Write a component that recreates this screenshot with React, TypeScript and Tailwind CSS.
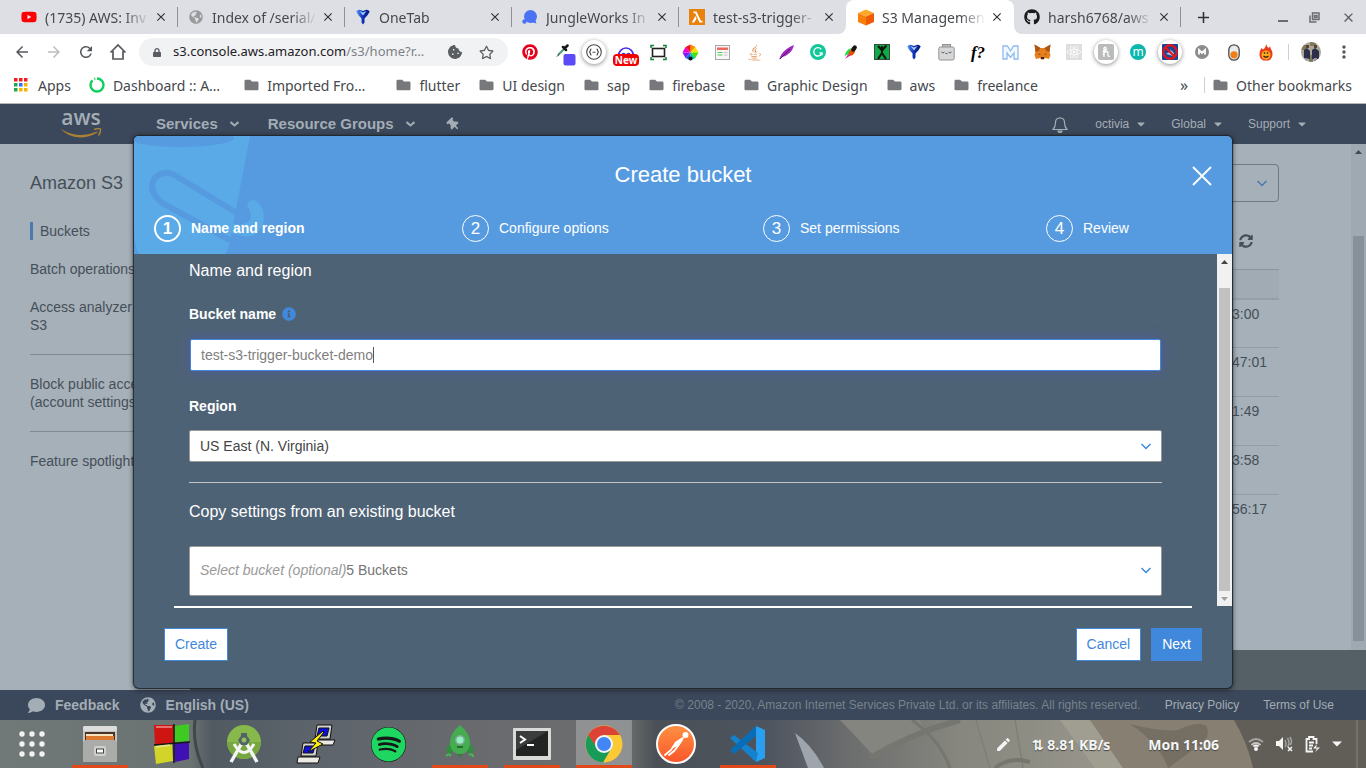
import React from "react";
import {
  FaYoutube, FaGithub, FaPinterest, FaJava, FaReact, FaSpotify, FaThumbtack,
  FaComment, FaGlobeAmericas, FaInfoCircle, FaSyncAlt, FaLock, FaCookieBite,
  FaFolder, FaCaretDown, FaRegStar,
} from "react-icons/fa";
import { MdArrowBack, MdArrowForward, MdRefresh, MdClose, MdAdd, MdMoreVert, MdEdit } from "react-icons/md";

const chromeFont = "font-['Noto_Sans',sans-serif]";
const awsFont = "font-['Liberation_Sans',Arial,sans-serif]";

/* ---------- favicons ---------- */

const OneTabIcon = () => (
  <svg width="14" height="16" viewBox="0 0 14 16">
    <defs>
      <linearGradient id="onetab" x1="0" x2="1">
        <stop offset="0" stopColor="#5a98f4" />
        <stop offset="0.5" stopColor="#0a2fb4" />
        <stop offset="1" stopColor="#061a70" />
      </linearGradient>
    </defs>
    <path d="M0.300 2.500 Q2 0 4.500 1 L7 2 L9.500 1 Q12 0 13.700 2.500 Q12 6.500 8.500 9.500 V13.500 L7 15.500 L5.500 13.500 V9.500 Q2 6.500 0.300 2.500Z" fill="url(#onetab)" />
    <path d="M3.500 2 L7 6.500 L10.500 2 L7 3.500Z" fill="#a9cdfb" />
  </svg>
);
const JungleIcon = () => (
  <svg width="16" height="16" viewBox="0 0 16 16" fill="#4a72f5">
    <circle cx="8.500" cy="7.500" r="6.500" />
    <circle cx="2.500" cy="12.500" r="2.200" />
    <path d="M9 13 L14.500 14.500 L13 10Z" />
  </svg>
);
const LambdaIcon = () => (
  <svg width="16" height="16" viewBox="0 0 16 16">
    <rect width="16" height="16" fill="#e8820c" />
    <path d="M4.500 2.500 H7.500 L12 12 L13.500 11.500 V13.500 H10.500 L6.200 4.200 H4.500Z M6.400 7 L7.600 9.500 L5.200 13.500 H2.800Z" fill="#fff" />
  </svg>
);
const CubeIcon = () => (
  <svg width="16" height="17" viewBox="0 0 16 17">
    <path d="M8 0.500 L16 4 L8 7.500 L0 4Z" fill="#ffa92c" />
    <path d="M0 4 L8 7.500 V16.500 L0 13Z" fill="#f77f0a" />
    <path d="M16 4 L8 7.500 V16.500 L16 13Z" fill="#ee5a05" />
  </svg>
);

const tabs = [
  { title: "(1735) AWS: Inv", icon: <FaYoutube className="text-[16px] text-[#f00]" /> },
  { title: "Index of /serial/", icon: <FaGlobeAmericas className="text-[14px] text-[#9a9a9c]" /> },
  { title: "OneTab", icon: <OneTabIcon /> },
  { title: "JungleWorks In", icon: <JungleIcon /> },
  { title: "test-s3-trigger-", icon: <LambdaIcon /> },
  { title: "S3 Managemen", icon: <CubeIcon />, active: true },
  { title: "harsh6768/aws", icon: <FaGithub className="text-[16px] text-[#1b1b1d]" /> },
];

function TabStrip() {
  return (
    <div className="flex h-[34px] items-stretch bg-[#dedfe5] pl-[11px] text-[14px] text-[#45484c]">
      {tabs.map((t, i) => (
        <div
          key={t.title}
          className={
            t.active
              ? "relative flex w-[168px] shrink-0 items-center rounded-t-lg bg-white pr-[10px] pl-[12px]"
              : "flex w-[167px] shrink-0 items-center pr-[10px] pl-[10px]"
          }
        >
          {t.active && (
            <>
              <svg className="absolute bottom-0 -left-2" width="8" height="8"><path d="M8 0 A8 8 0 0 1 0 8 H8Z" fill="#fff" /></svg>
              <svg className="absolute -right-2 bottom-0" width="8" height="8"><path d="M0 0 A8 8 0 0 0 8 8 H0Z" fill="#fff" /></svg>
            </>
          )}
          <span className="flex w-4 shrink-0 justify-center">{t.icon}</span>
          <span className="ml-2 flex-1 overflow-hidden whitespace-nowrap [mask-image:linear-gradient(to_right,#000_75%,transparent)]">{t.title}</span>
          <button aria-label="Close tab" className="ml-1 text-[14px] text-[#303236]"><MdClose /></button>
          {!t.active && i !== 4 && <span className="-mr-[10px] ml-[9px] h-5 w-px bg-[#8f9196]" />}
        </div>
      ))}
      <button aria-label="New tab" className="ml-[13px] text-[19px] text-[#303236]"><MdAdd /></button>
      <div className="ml-auto flex items-center gap-[21px] pr-[10px] text-[#5a5c60]">
        <button aria-label="Minimize" className="mt-2 h-[2px] w-[10px] bg-[#6a6c70]" />
        <button aria-label="Restore">
          <svg width="11" height="11" viewBox="0 0 11 11" fill="none" stroke="#6a6c70" strokeWidth="1.500"><path d="M3.500 1 H10 V7.500 H3.500Z M1 3.500 V10 H7.500 M5.500 3.500 h2.500 v2 h-2.500z" /></svg>
        </button>
        <button aria-label="Close window" className="text-[15px]"><MdClose /></button>
      </div>
    </div>
  );
}

/* ---------- extensions ---------- */

const Badge = ({ children }: { children: React.ReactNode }) => (
  <span className="flex size-6 items-center justify-center rounded-full bg-white shadow-[0_1px_4px_rgba(0,0,0,0.45)]">{children}</span>
);

const extensions: [string, React.ReactNode][] = [
  ["Pinterest", <FaPinterest className="text-[16px] text-[#e8001c]" />],
  ["Color picker", (
    <svg width="22" height="22" viewBox="0 0 22 22" className="mt-[6px] ml-2">
      <path d="M3 11 L9 5" stroke="#4d9a78" strokeWidth="2" /><path d="M2 12.500 l2-2" stroke="#222" />
      <path d="M8 3 L11 6 M9.500 4.500 L12.500 1.500" stroke="#16181a" strokeWidth="2.500" strokeLinecap="round" />
      <rect x="8.500" y="10" width="12" height="11.500" rx="2" fill="#5b4bf5" />
    </svg>)],
  ["JSON viewer", <Badge><svg width="16" height="16" viewBox="0 0 16 16" fill="none" stroke="#45484c" strokeWidth="1.100"><circle cx="8" cy="8" r="7.300" /><path d="M5.500 5 Q4.300 5 4.500 6.500 L3.500 8 L4.500 9.500 Q4.300 11 5.500 11 M10.500 5 Q11.700 5 11.500 6.500 L12.500 8 L11.500 9.500 Q11.700 11 10.500 11 M6.500 8.200h3" /></svg></Badge>],
  ["Screen recorder", (
    <span className="relative flex h-6 w-[26px] justify-center">
      <svg width="18" height="12" viewBox="0 0 18 12" fill="none" stroke="#4f2ee0" strokeWidth="1.700" className="mt-1"><path d="M1.500 12 A7.500 8 0 0 1 16.500 12 M5 10.500 q1.500-2 3 0 M10 10.500 q1.500-2 3 0" /></svg>
      <span className="absolute inset-x-0 bottom-[-2px] h-3 rounded-sm bg-[#f40000] text-center text-[10px] leading-3 font-bold text-white">New</span>
    </span>)],
  ["Screen capture", (
    <svg width="17" height="17" viewBox="0 0 17 17" fill="none"><rect x="2.500" y="4.500" width="12" height="8" stroke="#222" strokeWidth="1.600" /><path d="M1 4V1.500h3 M13 1.500h3v2.500 M16 13v2.500h-3 M4 15.500H1v-2.500" stroke="#118033" strokeWidth="1.500" /></svg>)],
  ["Color wheel", (
    <svg width="17" height="17" viewBox="0 0 17 17">
      <path d="M8.500 8.500 V0.500 L13.500 3Z" fill="#ff8a00" /><path d="M8.500 8.500 L13.500 3 L16.500 8.500Z" fill="#f5e400" />
      <path d="M8.500 8.500 H16.500 L13.500 14Z" fill="#4ae000" /><path d="M8.500 8.500 L13.500 14 L8.500 16.500Z" fill="#00c9a0" />
      <path d="M8.500 8.500 V16.500 L3.500 14Z" fill="#146cf5" /><path d="M8.500 8.500 L3.500 14 L0.500 8.500Z" fill="#7a1df0" />
      <path d="M8.500 8.500 H0.500 L3.500 3Z" fill="#f000d0" /><path d="M8.500 8.500 L3.500 3 L8.500 0.500Z" fill="#f01515" /><circle cx="8.500" cy="14.500" r="2" fill="#111" />
    </svg>)],
  ["Page notes", (
    <svg width="15" height="15" viewBox="0 0 15 15"><rect x="0.500" y="0.500" width="14" height="14" fill="#f7f7f7" stroke="#a8a8a8" /><rect x="2" y="2.500" width="11" height="2.500" fill="#f0675e" /><path d="M2.500 7.500h5M2.500 10h5" stroke="#53c957" /><path d="M9 7.500h3.500M9 10h3.500" stroke="#d5c0c0" /></svg>)],
  ["Java", <FaJava className="text-[17px] text-[#d98642]" />],
  ["Feather", (
    <svg width="17" height="17" viewBox="0 0 17 17"><path d="M1 16 Q3 9 8 5.500 Q12 2 16 1 Q15 6 11 9.500 Q7 13 3 13.500Z" fill="#a02abf" /><path d="M2 15 L12 5" stroke="#5b1173" /></svg>)],
  ["Grammarly", (
    <svg width="16" height="16" viewBox="0 0 16 16"><circle cx="8" cy="8" r="8" fill="#12c79a" /><path d="M11.300 5.300 A4.200 4.200 0 1 0 12 9 H9.500 M12 8.300 v3" fill="none" stroke="#fff" strokeWidth="1.400" /></svg>)],
  ["Color zilla", (
    <svg width="15" height="16" viewBox="0 0 15 16"><path d="M2 15 L6 9 L8 11Z" fill="#e612b8" /><path d="M1.500 12 Q3 6 8 4 L6 10Z" fill="#18e040" /><ellipse cx="9" cy="8" rx="2.500" ry="4" transform="rotate(35 9 8)" fill="#e84a0c" /><ellipse cx="11" cy="4.500" rx="2.200" ry="3.500" transform="rotate(35 11 4.500)" fill="#17120f" /></svg>)],
  ["Tabs exporter", (
    <svg width="16" height="16" viewBox="0 0 16 16"><rect x="0.500" y="0.500" width="15" height="15" fill="#10a848" stroke="#3c4a40" /><path d="M4 2 L8 6.500 L12.500 1.500 M8 6 V9 L12 15 M8 9 L4 15" fill="none" stroke="#07150b" strokeWidth="2" /><circle cx="8" cy="3.500" r="1.500" fill="#07150b" /></svg>)],
  ["OneTab", <OneTabIcon />],
  ["Robot", (
    <svg width="17" height="17" viewBox="0 0 17 17"><rect x="4.500" y="0.500" width="8" height="4" fill="#b7b9bb" stroke="#909294" /><rect x="0.800" y="3" width="15.400" height="13" rx="1.500" fill="#d5d7d8" stroke="#929496" /><path d="M3.500 8 q1.500 2 3 0 M10.500 8 q1.500 2 3 0 M7.500 9.500h2" fill="none" stroke="#55585a" /></svg>)],
  ["Font finder", <span className="font-['Liberation_Serif',serif] text-[17px] leading-none font-bold text-black italic">f?</span>],
  ["Mail", (
    <svg width="17" height="15" viewBox="0 0 17 15"><path d="M1 14 V1 H5.500 L8.500 6 L11.500 1 H16 V14 H12 V8 L8.500 12.500 L5 8 V14Z" fill="#f4f9ff" stroke="#8fbcec" strokeWidth="1.300" /></svg>)],
  ["MetaMask", (
    <svg width="17" height="16" viewBox="0 0 17 16"><path d="M0.500 0.500 L6.500 4 H10.500 L16.500 0.500 L15.500 8 L16.500 11 L15 15 L11 14 L10 15.500 H7 L6 14 L2 15 L0.500 11 L1.500 8Z" fill="#e67e1c" /><path d="M0.500 0.500 L6.500 4 L4.500 7 L1.500 8Z M16.500 0.500 L10.500 4 L12.500 7 L15.500 8Z" fill="#a9561a" /><path d="M4.500 9.500 l2.500 1 h-2z M12.500 9.500 l-2.500 1 h2z M7 13h3v2h-3z" fill="#2b2a36" /></svg>)],
  ["React tools", <span className="flex size-4 items-center justify-center bg-[#dededf]"><FaReact className="text-[14px] text-white" /></span>],
  ["Honey", <Badge><svg width="16" height="16" viewBox="0 0 16 16"><rect width="16" height="16" rx="2" fill="#b9bbbd" /><path d="M6 13 V4 Q8 2 8 4.500 L6 9 Q10 6 10 9 V11 Q10 13 12 12 M4.500 7.500 Q7 6.500 9 5.500" fill="none" stroke="#fff" strokeWidth="1.300" /></svg></Badge>],
  ["Momentum", <span className="flex size-4 items-center justify-center rounded-full bg-[#0cb7ae] text-[12px] leading-none text-white">m</span>],
  ["Blocker", <Badge><svg width="16" height="16" viewBox="0 0 16 16"><rect width="16" height="16" rx="1" fill="#1c4494" /><path d="M4 10 Q6 8 9 8 L8 5 L12 9 L11 12Z" fill="#a9c3e8" /><circle cx="8" cy="8" r="6.700" fill="none" stroke="#f01212" strokeWidth="2" /><path d="M3.500 3.500 L12.500 12.500" stroke="#f01212" strokeWidth="2" /></svg></Badge>],
  ["Mercury", <svg width="14" height="14" viewBox="0 0 14 14"><circle cx="7" cy="7" r="7" fill="#8c8c8c" /><path d="M4 9.500 V5 L7 8 L10 5 V9.500" fill="none" stroke="#fff" strokeWidth="1.800" /></svg>],
  ["Toggle", <svg width="12" height="17" viewBox="0 0 12 17"><rect x="0.800" y="0.800" width="10.400" height="15.400" rx="5.200" fill="#e9eaea" stroke="#4a4a4c" strokeWidth="1.300" /><circle cx="6" cy="10.800" r="3.600" fill="#f57e14" /></svg>],
  ["Flame", (
    <svg width="14" height="17" viewBox="0 0 14 17"><path d="M7 0 Q8 3 10 4 L11 2 Q11.500 5 13 7 Q15 14 9.500 16.500 H4.500 Q-1 14 1 7 L2.500 4 L4 5.500 Q7 3.500 7 0Z" fill="#ea3b1a" /><circle cx="7" cy="11" r="4.500" fill="#fbac1d" /><path d="M4.800 9h1.400M7.800 9h1.400M4.500 12 q2.500 2.500 5 0" stroke="#3f1b08" fill="none" strokeWidth="1.300" /></svg>)],
];

function Toolbar() {
  return (
    <div className="flex h-9 items-center bg-white pl-[13px]">
      <div className="flex shrink-0 items-center gap-[14px] text-[18px] text-[#55585c]">
        <button aria-label="Back"><MdArrowBack /></button>
        <button aria-label="Forward" className="text-[#bcbdc0]"><MdArrowForward /></button>
        <button aria-label="Reload"><MdRefresh /></button>
        <button aria-label="Home">
          <svg width="18" height="18" viewBox="0 0 18 18" fill="none" stroke="#55585c" strokeWidth="1.700"><path d="M1.500 9.500 L9 2 L16.500 9.500 M4 8 V16 H14 V8" /></svg>
        </button>
      </div>
      <div className="ml-3 flex h-7 min-w-0 flex-1 items-center rounded-full bg-[#f1f2f4] px-[14px]">
        <FaLock className="w-2 shrink-0 text-[11px] text-[#5a5d61]" />
        <div className="ml-3 flex flex-1 items-center text-[13px] text-[#1f2124]">
          <input aria-label="Address" defaultValue="s3.console.aws.amazon.com" className="bg-transparent [field-sizing:content] outline-none" />
          <span className="text-[#7d8084]">/s3/home?r…</span>
        </div>
        <FaCookieBite className="text-[14px] text-[#5a5d61]" />
        <button aria-label="Bookmark page" className="ml-[17px] text-[15px] text-[#5a5d61]"><FaRegStar /></button>
      </div>
      <div className="ml-[6px] flex shrink-0">
        {extensions.map(([name, icon]) => (
          <button key={name} aria-label={name} className="flex h-7 w-8 items-center justify-center">{icon}</button>
        ))}
      </div>
      <span className="ml-[6px] h-4 w-px shrink-0 bg-[#cfd0d2]" />
      <button aria-label="Profile" className="ml-3 shrink-0">
        <svg width="20" height="20" viewBox="0 0 20 20">
          <clipPath id="avatar"><circle cx="10" cy="10" r="10" /></clipPath>
          <g clipPath="url(#avatar)">
            <rect width="20" height="20" fill="#a9a795" />
            <path d="M0 3h5v5H0z M9 0h6v4H9z M8 13h4v7H8z" fill="#7c7a58" />
            <path d="M3 16 V8 L6 6 L9 9 V17Z M11 17 V8 L14 6 L18 9 V17Z" fill="#2c2f4a" />
            <path d="M4 16h2v4H4z M13 16h3v4h-3z" fill="#9c8fae" />
            <path d="M5 3h3v3H5z M13 3h3v3h-3z" fill="#5f4234" />
          </g>
        </svg>
      </button>
      <button aria-label="Browser menu" className="mr-[12px] ml-[13px] shrink-0 text-[20px] text-[#55585c]"><MdMoreVert /></button>
    </div>
  );
}

const bookmarks = ["Imported Fro…", "flutter", "UI design", "sap", "firebase", "Graphic Design", "aws", "freelance"];
const appDots = ["#f02020", "#f02020", "#f02020", "#20a84a", "#3b6cf0", "#f5b400", "#20a84a", "#f5b400", "#f5b400"];

function BookmarksBar() {
  return (
    <div className="flex h-[34px] items-center border-b border-[#b6b6b8] bg-white px-[14px] pb-[3px] text-[14px] whitespace-nowrap text-[#45484c]">
      <a href="#apps" className="flex items-center gap-[10px]">
        <svg width="14" height="14" viewBox="0 0 14 14">
          {appDots.map((c, i) => <rect key={i} x={(i % 3) * 5} y={Math.floor(i / 3) * 5} width="3.500" height="3.500" fill={c} />)}
        </svg>
        Apps
      </a>
      <a href="#dashboard" className="ml-[18px] flex items-center gap-2">
        <svg width="16" height="16" viewBox="0 0 16 16" fill="none" stroke="#10cf5c"><circle cx="8" cy="8" r="6.500" strokeWidth="2.400" strokeDasharray="35 2 1 2" transform="rotate(-90 8 8)" /></svg>
        Dashboard :: A…
      </a>
      <div className="ml-6 flex flex-1 gap-[19px]">
        {bookmarks.map((b) => (
          <a key={b} href="#folder" className={b === "Imported Fro…" ? "mr-3 flex items-center gap-2" : "flex items-center gap-2"}>
            <FaFolder className="w-[15px] text-[14px] text-[#77787b]" />{b}
          </a>
        ))}
      </div>
      <button aria-label="More bookmarks" className="text-[16px] leading-none">»</button>
      <span className="mr-2 ml-4 h-4 w-px bg-[#cfd0d2]" />
      <a href="#other" className="flex items-center gap-2"><FaFolder className="w-[15px] text-[14px] text-[#77787b]" />Other bookmarks</a>
    </div>
  );
}

/* ---------- console page ---------- */

const Chevron = ({ color }: { color: string }) => (
  <svg width="10" height="7" viewBox="0 0 10 7" fill="none" stroke={color} strokeWidth="1.500"><path d="M0.500 1 L5 5.500 L9.500 1" /></svg>
);
const NavChevron = () => (
  <svg width="9" height="6" viewBox="0 0 9 6" fill="none" stroke="#a3adb5" strokeWidth="2"><path d="M0.500 1 L4.500 4.500 L8.500 1" /></svg>
);

function ConsoleNav() {
  return (
    <nav className="flex h-10 items-center bg-[#3b475a] px-[60px] text-[#a3adb5]">
      <a href="#aws" className="flex w-[42px] flex-col items-center">
        <span className="h-[17px] font-['Open_Sans',sans-serif] text-[21px] leading-[13px] font-semibold">aws</span>
        <svg width="42" height="10" viewBox="0 0 42 10"><path d="M0 0.500 Q10 7 20 7 Q28 7 37 3.500 L37.500 4.500 Q29 9.500 20 9.500 Q8 9 0 0.500Z" fill="#a98135" /><path d="M34 1.500 Q39 0 40.500 1 Q41 4 38.500 7.500" fill="none" stroke="#a98135" strokeWidth="1.500" /></svg>
      </a>
      <button className="ml-[54px] flex items-center gap-3 text-[15px] font-bold">Services <NavChevron /></button>
      <button className="ml-[29px] flex items-center gap-3 text-[15px] font-bold">Resource Groups <NavChevron /></button>
      <button aria-label="Pin" className="ml-8 text-[13px]"><FaThumbtack className="-rotate-45" /></button>
      <div className="ml-auto flex items-center text-[12px]">
        <button aria-label="Notifications" className="mr-[27px]">
          <svg width="16" height="17" viewBox="0 0 16 17" fill="none" stroke="#a3adb5" strokeWidth="1.200"><path d="M8 1 V2 M1 13.500 Q3.500 11 3.500 6.500 Q3.500 2 8 2 Q12.500 2 12.500 6.500 Q12.500 11 15 13.500Z" /><path d="M6 15 a2 1.500 0 0 0 4 0Z" fill="#a3adb5" /></svg>
        </button>
        <button className="mr-[26px] flex items-center gap-2">octivia <FaCaretDown className="w-2" /></button>
        <button className="mr-[26px] flex items-center gap-2">Global <FaCaretDown className="w-2" /></button>
        <button className="flex items-center gap-2">Support <FaCaretDown className="w-2" /></button>
      </div>
    </nav>
  );
}

const modified = ["3:00", "47:01", "1:49", "3:58", "56:17"];

function ConsoleBody() {
  return (
    <div className="flex min-h-[546px] flex-1 bg-[#a5b0b9] text-[14px] leading-[18px] text-[#454f58]">
      <aside className="w-[190px] shrink-0 px-[30px] pt-[28px]">
        <h2 className="text-[18px] leading-[22px]">Amazon S3</h2>
        <a href="#buckets" className="mt-7 block border-l-[3px] border-[#4b79b0] pl-[7px]">Buckets</a>
        <a href="#batch" className="mt-5 block">Batch operations</a>
        <a href="#analyzer" className="mt-5 block">Access analyzer<br />S3</a>
        <hr className="mt-5 border-[#7f8b94]" />
        <a href="#block" className="mt-5 block whitespace-nowrap">Block public access<br />(account settings)</a>
        <hr className="mt-5 border-[#7f8b94]" />
        <a href="#spotlight" className="mt-5 block">Feature spotlight</a>
      </aside>
      <div className="flex flex-1 flex-col">
        <div className="flex flex-1">
          <main className="flex-1 pt-5 pr-[72px] pl-[30px]">
            <button aria-label="Bucket type" className="flex h-[38px] w-full items-center justify-end rounded-sm border border-[#6d7b86] pr-[11px]"><Chevron color="#4b79b0" /></button>
            <div className="flex h-[67px] items-center justify-end pt-[10px] pr-[26px]">
              <button aria-label="Refresh" className="text-[14px]"><FaSyncAlt /></button>
            </div>
            <table aria-label="Buckets" className="w-full border-collapse">
              <thead>
                <tr className="h-[29px] border-t border-b-2 border-t-[#8a959e] border-b-[#959fa8] bg-[#a1abb4]"><th /><th className="w-[47px]" /></tr>
              </thead>
              <tbody>
                {modified.map((m) => (
                  <tr key={m} className="h-[49px] border-b border-[#929da6] last:border-b-0"><td /><td className="pt-[5px] align-top">{m}</td></tr>
                ))}
              </tbody>
            </table>
          </main>
          <div className="flex w-[15px] flex-col items-center bg-[#9fa9b2] pt-[6px] pb-[9px]" aria-hidden="true">
            <svg width="7" height="4"><path d="M3.500 0 L7 4 H0Z" fill="#414b54" /></svg>
            <div className="mt-[82px] w-[11px] flex-1 bg-[#879199]" />
          </div>
        </div>
        <div className="h-10 bg-[#545f66]" />
      </div>
    </div>
  );
}

function ConsoleFooter() {
  return (
    <footer className="flex h-[30px] items-center bg-[#3b475a] pr-8 pl-7 text-[12px] text-[#a3adb5]">
      <a href="#feedback" className="flex items-center gap-[10px] text-[14px] font-bold"><FaComment className="text-[17px]" />Feedback</a>
      <a href="#language" className="ml-5 flex items-center gap-[10px] text-[14px] font-bold"><FaGlobeAmericas className="text-[16px]" />English (US)</a>
      <span className="ml-auto text-[#76838d]">© 2008 - 2020, Amazon Internet Services Private Ltd. or its affiliates. All rights reserved.</span>
      <a href="#privacy" className="ml-6">Privacy Policy</a>
      <a href="#terms" className="ml-6">Terms of Use</a>
    </footer>
  );
}

/* ---------- dialog ---------- */

const steps = ["Name and region", "Configure options", "Set permissions", "Review"];

function BucketArt() {
  return (
    <svg className="absolute top-0 left-0" width="132" height="118" viewBox="0 0 132 118" aria-hidden="true">
      <path d="M0 0 H116 L96 104 Q94 114 91 118 H5 Q1 112 0 95Z" fill="#5aaae7" />
      <ellipse cx="47" cy="2" rx="53" ry="9" fill="#569be0" />
      <path d="M103 77 L42 40 Q31 33 22 41 Q13 51 24 63 Q26 66 32 69 L96 104" fill="none" stroke="#569be0" strokeWidth="6" />
      <path d="M103 77 Q109 83 114 80 Q116 78 113 73" fill="none" stroke="#569be0" strokeWidth="8" />
      <path d="M113 70 Q114 63 121 64 Q130 69 130 84 Q127 98 116 100 Q106 101 95 96 L97 87 Q109 91 116 84 Q119 78 113 70Z" fill="#5aaae7" />
    </svg>
  );
}

function CreateBucketDialog() {
  return (
    <div className="absolute inset-0 flex items-start justify-center px-[134px] pt-8">
      <section role="dialog" aria-label="Create bucket" className="w-full overflow-hidden rounded-[5px] bg-[#4e6276] text-[14px] text-white shadow-[0_0_1px_1px_#20272f,0_1px_5px_1px_rgba(0,0,0,0.5)]">
        <header className="relative bg-[#569be0]">
          <BucketArt />
          <div className="relative flex h-[78px] items-center justify-center pb-[2px]">
            <h1 className="text-[22px]">Create bucket</h1>
            <button aria-label="Close dialog" className="absolute top-[30px] right-5">
              <svg width="20" height="20" viewBox="0 0 20 20" stroke="#fff" strokeWidth="1.800"><path d="M1 1 L19 19 M19 1 L1 19" /></svg>
            </button>
          </div>
          <ol className="relative grid h-10 grid-cols-[308fr_301fr_283fr_186fr] items-start pt-px pl-5">
            {steps.map((s, i) => (
              <li key={s} className={i === 0 ? "flex items-center gap-[10px] font-bold" : "flex items-center gap-[10px]"}>
                <span className={i === 0
                  ? "flex size-[27px] items-center justify-center rounded-full border-2 border-white text-[17px] leading-none"
                  : "flex size-[27px] items-center justify-center rounded-full border border-white text-[17px] leading-none"}>{i + 1}</span>
                {s}
              </li>
            ))}
          </ol>
        </header>
        <div className="flex">
          <form className="flex-1 pt-[7px] pr-[55px] pb-[10px] pl-[55px]" onSubmit={(e) => e.preventDefault()}>
            <h2 className="text-[16px] leading-5">Name and region</h2>
            <div className="mt-[23px] flex items-center gap-[6px] leading-5 font-bold">
              <label htmlFor="bucket-name">Bucket name</label>
              <FaInfoCircle className="text-[14px] text-[#4089dc]" />
            </div>
            <div className="relative mx-px mt-[15px]">
              <input
                id="bucket-name"
                type="text"
                defaultValue="test-s3-trigger-bucket-demo"
                className="block h-8 w-full rounded-[2px] border border-[#3f88dc] bg-white px-[10px] text-[#808080] shadow-[0_0_12px_rgba(80,90,190,0.6)] outline-none"
              />
              <span className="absolute top-2 left-[183px] h-4 w-px bg-[#555]" aria-hidden="true" />
            </div>
            <label htmlFor="region" className="mt-[25px] block leading-5 font-bold">Region</label>
            <div className="relative mt-[14px]">
              <select id="region" className="block h-8 w-full appearance-none rounded-[2px] border border-[#999] bg-white px-[10px] text-[#444]">
                <option>US East (N. Virginia)</option>
              </select>
              <span className="pointer-events-none absolute inset-y-0 right-[11px] flex items-center"><Chevron color="#3f88dc" /></span>
            </div>
            <hr className="mt-5 border-[#c2c4c6]" />
            <h2 className="mt-[19px] text-[16px] leading-5">Copy settings from an existing bucket</h2>
            <button type="button" className="mt-6 flex h-[50px] w-full items-center rounded-[2px] border border-[#999] bg-white px-[10px] pb-[2px] text-[#757575]">
              <span className="text-[#999] italic">Select bucket (optional)</span>5 Buckets
              <span className="ml-auto"><Chevron color="#3f88dc" /></span>
            </button>
          </form>
          <div className="flex w-[15px] flex-col items-center bg-[#f1f1f1] pt-[6px] pb-[5px]" aria-hidden="true">
            <svg width="7" height="4"><path d="M3.500 0 L7 4 H0Z" fill="#444" /></svg>
            <div className="mt-6 mb-[6px] w-[11px] flex-1 bg-[#c1c1c1]" />
            <svg width="7" height="4"><path d="M3.500 4 L7 0 H0Z" fill="#a0a0a0" /></svg>
          </div>
        </div>
        <div className="mr-10 ml-10 h-[2px] bg-white" />
        <footer className="flex gap-[10px] px-[30px] pt-5 pb-[27px]">
          <button className="mr-auto h-[33px] border border-[#3f88dc] bg-white px-[10px] text-[#3f88dc]">Create</button>
          <button className="h-[33px] border border-[#3f88dc] bg-white px-[10px] text-[#3f88dc]">Cancel</button>
          <button className="h-[33px] border border-[#3f88dc] bg-[#3f88dc] px-[10px]">Next</button>
        </footer>
      </section>
    </div>
  );
}

/* ---------- desktop panel ---------- */

const launchers: { name: string; running?: boolean; focused?: boolean; icon: React.ReactNode }[] = [
  { name: "Files", running: true, icon: (
    <svg width="36" height="38" viewBox="0 0 36 38"><rect x="1" y="1" width="34" height="36" rx="2" fill="#c5c6c4" /><rect x="1" y="1" width="34" height="5" rx="2" fill="#dcdddb" /><rect x="3" y="7" width="30" height="10" fill="#493228" /><path d="M4 9h27v2H4z" fill="#f6e2bd" /><path d="M4 11h28v5H4z" fill="#dc792e" /><path d="M1 17 Q2 15 4 15 H32 Q34 15 35 17 V37 H1Z" fill="#aaacaa" /><rect x="12" y="21" width="12" height="10" rx="2" fill="#d0d1cf" /><rect x="14.500" y="24" width="7" height="4" fill="#fff" stroke="#444" /></svg>) },
  { name: "Blocks", icon: (
    <svg width="38" height="42" viewBox="0 0 38 42"><path d="M1 2 H21 L20 20 L2 22Z" fill="#cf1512" /><path d="M21 3 L36 1 V18 L21 19Z" fill="#3fca22" /><path d="M1 23 L19 20 L20 38 L3 41Z" fill="#d2d42a" /><path d="M21 20 L36 20 V36 L22 39Z" fill="#3f10b4" /><path d="M21 1 V40 M1 22 L37 19" stroke="#151515" strokeWidth="1.500" /><path d="M3 4h16M3 24l14-2" stroke="#fff" strokeOpacity="0.400" strokeWidth="2" /></svg>) },
  { name: "Android Studio", icon: (
    <svg width="34" height="38" viewBox="0 0 34 38"><circle cx="17" cy="17" r="17" fill="#86b84b" /><path d="M0 17 A17 17 0 0 0 34 17Z" fill="#78a742" /><path d="M16 16 L4 37 M18 16 L30 37" stroke="#f4f4f4" strokeWidth="3.500" /><path d="M7 19 Q17 36 27 19" stroke="#f4f4f4" strokeWidth="3" fill="none" /><path d="M14 8h6v3l3 4-3 5h-6l-3-5 3-4z" fill="#53616b" /><circle cx="17" cy="15" r="2.500" fill="#91bf5a" /></svg>) },
  { name: "PuTTY", icon: (
    <svg width="40" height="40" viewBox="0 0 40 40" stroke="#111"><path d="M21 1 H36 L34 15 H19Z" fill="#d4d2cc" /><path d="M23 4 H33 L31 12 H21Z" fill="#0d10d8" /><path d="M17 16 H39 L37 21 H15Z" fill="#eceae4" /><path d="M7 19 H22 L20 32 H5Z" fill="#d4d2cc" /><path d="M9 22 H19 L17 29 H7Z" fill="#0d10d8" /><path d="M2 33 H24 L22 39 H1Z" fill="#eceae4" /><path d="M27 7 L14 18 L20 19 L12 28 L27 20 L21 17 L28 8Z" fill="#fbed10" /></svg>) },
  { name: "Spotify", icon: <span className="flex items-center rounded-full bg-[#151b18] text-[35px] text-[#1ed760]"><FaSpotify /></span> },
  { name: "Rocket", running: true, icon: (
    <svg width="32" height="38" viewBox="0 0 32 38"><path d="M8 16 L2 24 L5 30 L10 25Z M24 16 L30 24 L27 30 L22 25Z" fill="#328d3f" /><path d="M16 0 Q27 9 26 20 Q24 29 16 29 Q8 29 6 20 Q5 9 16 0Z" fill="#43ad4f" /><circle cx="16" cy="15" r="5" fill="#8aa59a" /><circle cx="16" cy="15" r="3.500" fill="#8ff0c0" /><path d="M13 22h6" stroke="#276f31" strokeWidth="2" /><path d="M13 29 L16 33 L19 29Z" fill="#3e7a44" /><path d="M2 31 q3-3 5 0M25 30q4-2 4 2" stroke="#47b853" strokeWidth="2" fill="none" /></svg>) },
  { name: "Terminal", running: true, icon: (
    <svg width="38" height="32" viewBox="0 0 38 32"><rect width="38" height="32" rx="1" fill="#d9dbd8" /><rect x="3" y="3" width="32" height="25" fill="#222423" /><path d="M3 3h32L3 22z" fill="#3b3d3c" /><path d="M7 8 L12 11.500 L7 15 M14 17h7" stroke="#fff" strokeWidth="2" fill="none" /></svg>) },
  { name: "Chrome", running: true, focused: true, icon: (
    <svg width="38" height="38" viewBox="0 0 38 38"><circle cx="19" cy="19" r="18.500" fill="#fbc934" /><path d="M3 10 A18.500 18.500 0 0 1 35 10 H19 L11 22Z" fill="#dd4236" /><path d="M3 10 A18.500 18.500 0 0 0 18 37.500 L26 24 L13 24Z" fill="#189b57" /><circle cx="19" cy="19" r="9" fill="#f5f5f5" /><circle cx="19" cy="19" r="7" fill="#4285f4" /></svg>) },
  { name: "Postman", icon: (
    <svg width="40" height="40" viewBox="0 0 40 40">
      <defs><linearGradient id="postman" x2="0" y2="1"><stop offset="0" stopColor="#ff9142" /><stop offset="1" stopColor="#f9552a" /></linearGradient></defs>
      <circle cx="20" cy="20" r="19" fill="url(#postman)" stroke="#fff" strokeWidth="2" /><circle cx="29.500" cy="11" r="3" fill="#fff" /><path d="M27 14 L19 20 L15 26 L9 31 M26 16 L22 22 L18 27 L13 31" stroke="#fff" strokeWidth="1.800" fill="none" strokeLinecap="round" /><path d="M27 13 L19 18 L17 24 L22 22Z" fill="#fff" /></svg>) },
  { name: "VS Code", running: true, icon: (
    <svg width="36" height="36" viewBox="0 0 36 36"><path d="M26 0 L35 4 V32 L26 36Z" fill="#2b9fef" /><path d="M0 12 L4 9 L28 27 L26 36Z" fill="#1483cf" /><path d="M0 24 L26 0 V10 L4 28Z" fill="#096db5" /></svg>) },
];

function Wallpaper() {
  return (
    <svg className="absolute inset-0 h-full w-full" viewBox="0 0 1366 48" preserveAspectRatio="none" aria-hidden="true">
      <defs>
        <linearGradient id="wall" x1="0" x2="1">
          <stop offset="0" stopColor="#707977" /><stop offset="0.140" stopColor="#6a7272" /><stop offset="0.155" stopColor="#515a61" />
          <stop offset="0.230" stopColor="#5d646c" /><stop offset="0.340" stopColor="#686a6d" /><stop offset="0.460" stopColor="#6b6d6e" /><stop offset="0.480" stopColor="#4a5056" />
          <stop offset="0.560" stopColor="#4d545e" /><stop offset="0.620" stopColor="#6b6d6e" /><stop offset="0.700" stopColor="#86867e" />
          <stop offset="0.800" stopColor="#96948a" /><stop offset="1" stopColor="#77736a" />
        </linearGradient>
      </defs>
      <rect width="1366" height="48" fill="url(#wall)" />
      <path d="M195 0 Q192 24 203 48" stroke="#42484a" strokeWidth="3" fill="none" />
      <path d="M840 0 H920 L928 14 L874 36Z" fill="#84857f" />
      <path d="M795 13 Q812 25 824 48 H808Z" fill="#9ea5ac" />
      <path d="M870 38 Q915 12 960 0" stroke="#767671" strokeWidth="6" fill="none" />
      <path d="M912 0 Q940 20 950 48" stroke="#767671" strokeWidth="3" fill="none" />
      <path d="M976 0 L990 48 M1015 0 L1023 48 M1062 0 L1080 18" stroke="#807e77" strokeWidth="1.500" fill="none" />
      <path d="M995 48 Q1010 36 1030 42" stroke="#77756e" strokeWidth="4" fill="none" />
      <path d="M1060 0 H1090 L1123 48 H1095Z" fill="#a09e91" />
      <path d="M1090 0 H1235 Q1248 24 1253 48 H1123Z" fill="#867f72" />
      <path d="M1130 4 Q1160 12 1178 10 Q1200 0 1207 7 Q1212 20 1190 32 L1168 48 Q1160 24 1130 4Z" fill="#756f63" />
      <path d="M1234 0 H1366 V48 H1253 Q1248 24 1234 0Z" fill="#605e57" />
      <path d="M1357 0 V48" stroke="#85837c" />
    </svg>
  );
}

function DesktopPanel() {
  return (
    <div className="relative h-12">
      <Wallpaper />
      <div className="relative flex h-12 items-center font-bold text-white">
        <button aria-label="Applications" className="ml-4 flex w-8 justify-center">
          <svg width="26" height="26" viewBox="0 0 26 26" fill="#f3f3f2">
            {[0, 1, 2, 3, 4, 5, 6, 7, 8].map((i) => <circle key={i} cx={3 + (i % 3) * 10} cy={3 + Math.floor(i / 3) * 10} r="2.700" />)}
          </svg>
        </button>
        <div className="ml-6 flex gap-4">
          {launchers.map((l) => (
            <button key={l.name} aria-label={l.name} className={l.focused ? "relative flex h-12 w-14 items-center justify-center bg-white/25" : "relative flex h-12 w-14 items-center justify-center"}>
              {l.icon}
              {l.running && <span className="absolute inset-x-0 bottom-0 h-[3px] bg-[#e0491a]" />}
            </button>
          ))}
        </div>
        <div className="ml-auto flex items-center pr-[24px] text-[14px] text-[#f5f5f5] [text-shadow:0_1px_1px_#444]">
          <MdEdit className="text-[17px]" />
          <span className="ml-5">⇅ 8.81 KB/s</span>
          <span className="ml-[38px]">Mon 11:06</span>
          <div className="ml-[29px] flex items-center gap-3">
            <svg width="16" height="16" viewBox="0 0 16 16" fill="none" strokeWidth="1.700"><path d="M1 6 Q8 0 15 6" stroke="#a4a39f" /><path d="M3.500 9 Q8 5 12.500 9" stroke="#c8c7c4" /><circle cx="8" cy="13" r="2" fill="#f5f5f5" /><path d="M5.500 10.500 Q8 8.500 10.500 10.500" stroke="#f5f5f5" /></svg>
            <svg width="17" height="16" viewBox="0 0 17 16" fill="none"><path d="M0 5h3l4-4v13l-4-4H0z" fill="#f5f5f5" /><path d="M9 4q2 4 0 7M11.500 2q3 5 0 9M14 1q3 5 0 8" stroke="#a4a39f" strokeWidth="1.500" /><path d="M12 11l4 4M16 11l-4 4" stroke="#f5f5f5" strokeWidth="1.500" /></svg>
            <svg width="15" height="17" viewBox="0 0 15 17" fill="none" stroke="#f5f5f5" strokeWidth="1.800"><path d="M8 15.500 H1.500 V3 H4 V1 H8.500 V3 H11.500 V8 M4 6.500h5M4 9.500h4M4 12.500h3" /><path d="M12 8 L8 12.500 H12 L10 16 L15 11.500 H11Z" fill="#f5f5f5" stroke="none" /></svg>
            <svg width="10" height="6"><path d="M0 0.500H10L5 5.500Z" fill="#f5f5f5" /></svg>
          </div>
        </div>
      </div>
    </div>
  );
}

export default function App() {
  return (
    <div className={`flex min-h-screen flex-col ${chromeFont}`}>
      <TabStrip />
      <Toolbar />
      <BookmarksBar />
      <div className={`relative flex flex-1 flex-col ${awsFont}`}>
        <ConsoleNav />
        <ConsoleBody />
        <ConsoleFooter />
        <CreateBucketDialog />
      </div>
      <DesktopPanel />
    </div>
  );
}
